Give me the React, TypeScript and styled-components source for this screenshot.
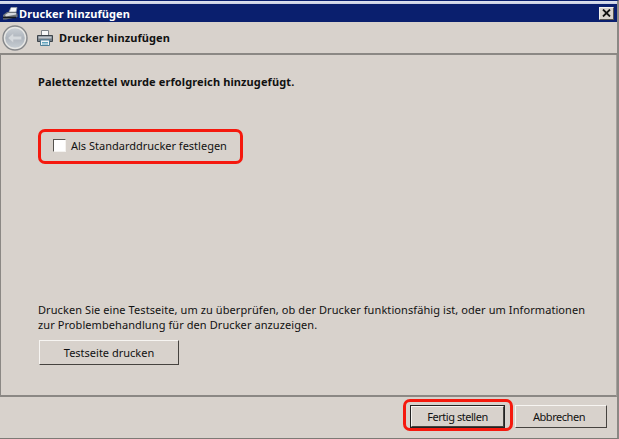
import styled, { createGlobalStyle } from 'styled-components';

const GlobalStyle = createGlobalStyle`
    html, body {
        margin: 0;
        padding: 0;
        background: #d8d2cc;
    }
    body {
        font-family: 'Noto Sans', 'Liberation Sans', sans-serif;
        font-size: 11px;
        color: #111;
    }
`

const Frame = styled.div`
    width: 619px;
    height: 439px;
    box-sizing: border-box;
    display: flex;
    flex-direction: column;
    overflow: hidden;
    background: #d8d2cc;
    border-top: 1px solid #0a1f6e;
    border-bottom: 1px solid #7d7a75;
    border-right: 2px solid #8b8884;
`

const TopEdge = styled.div`
    height: 3px;
    background: linear-gradient(#dfe3f0, #c9cfe2);
`

const TitleBar = styled.div`
    height: 18px;
    display: flex;
    align-items: center;
    gap: 1px;
    padding: 0 3px 0 2px;
    background: #0a1f6e;
    color: #fff;
    font-size: 11px;
    font-weight: 700;
    letter-spacing: 0.1px;
`

const TitleText = styled.span`
    flex: 1;
`

const CloseButton = styled.div`
    width: 15px;
    height: 13px;
    box-sizing: border-box;
    display: flex;
    align-items: center;
    justify-content: center;
    background: #d8d2cc;
    border: 1px solid;
    border-color: #f4f2ef #55524e #55524e #f4f2ef;
`

const Header = styled.div`
    height: 33px;
    display: flex;
    align-items: center;
    padding-left: 2px;
    border-bottom: 2px solid #8b8884;
    box-sizing: border-box;
    font-weight: 700;
`

const HeaderTitle = styled.span`
    margin-left: 6px;
    letter-spacing: 0.1px;
`

const PrinterSlot = styled.div`
    margin-left: 9px;
    display: flex;
`

const Panel = styled.div`
    flex: 1;
    display: flex;
    flex-direction: column;
    padding: 19px 30px 30px 37px;
    border-left: 1px solid #8b8884;
    border-right: 1px solid #a5a29d;
    border-bottom: 2px solid #8b8884;
`

const Message = styled.div`
    font-weight: 700;
    line-height: 16px;
    letter-spacing: 0.11px;
`

const Highlight = styled.div`
    align-self: flex-start;
    display: flex;
    align-items: center;
    gap: 5px;
    width: 205px;
    height: 35px;
    margin-top: 39px;
    padding: 0 0 3px 12px;
    box-sizing: border-box;
    border: 3px solid #f5190e;
    border-radius: 7px;
`

const Checkbox = styled.span`
    width: 13px;
    height: 13px;
    box-sizing: border-box;
    background: #fff;
    border: 1px solid;
    border-color: #55524e #f4f2ef #f4f2ef #55524e;
`

const Note = styled.p`
    margin: auto 0 0;
    line-height: 15px;
    white-space: nowrap;
    letter-spacing: 0.08px;
`

const Button = styled.button<{ $width: number; $height: number; $isDefault?: boolean }>`
    width: ${(p) => p.$width}px;
    height: ${(p) => p.$height}px;
    padding: 0;
    background: #d8d2cc;
    color: #111;
    font: inherit;
    border: 1px solid;
    border-color: #f7f5f2 #46433f #46433f #f7f5f2;
    box-shadow: ${(p) => (p.$isDefault ? '0 0 0 1px #222' : 'none')};
`

const TestButton = styled(Button)`
    align-self: flex-start;
    margin-top: 8px;
    margin-left: 1px;
`

const FooterButton = styled(Button)`
    letter-spacing: -0.45px;
`

const CancelButton = styled(FooterButton)`
    margin-top: 6px;
    padding-right: 4px;
`

const Footer = styled.div`
    height: 41px;
    box-sizing: border-box;
    display: flex;
    align-items: flex-start;
    justify-content: flex-end;
    padding: 2px 10px 0 0;
    gap: 2px;
`

const DefaultHighlight = styled.div`
    display: flex;
    padding: 4px 6px 1px 5px;
    border: 3px solid #f5190e;
    border-radius: 7px;
`

function BackIcon() {
    return (
        <svg width="26" height="26" viewBox="0 0 26 26">
            <defs>
                <linearGradient id="back" x1="0" y1="0" x2="0" y2="1">
                    <stop offset="0" stopColor="#c9ced4" />
                    <stop offset="0.5" stopColor="#aeb5bd" />
                    <stop offset="1" stopColor="#c6ccd2" />
                </linearGradient>
            </defs>
            <circle cx="13" cy="13" r="12" fill="#e6e6e4" stroke="#85878a" strokeWidth="1.4" />
            <circle cx="13" cy="13" r="9.8" fill="url(#back)" />
            <path d="M6 13l5.5-5v3.2h8v3.6h-8V18z" fill="#d5d9dd" stroke="#b9bec4" strokeWidth="0.6" />
        </svg>
    )
}

function PrinterIcon() {
    return (
        <svg width="16" height="16" viewBox="0 0 16 16">
            <path d="M4.5 .5h7v5h-7z" fill="#f7f8f9" stroke="#7c8288" />
            <path d="M.5 5.5h15v6H.5z" fill="#737c85" stroke="#3d444b" />
            <path d="M1.5 6.5h13v2h-13z" fill="#c0c7cd" />
            <path d="M3.5 10h9v5.5h-9z" fill="#f2f5f7" stroke="#4d7f99" />
            <path d="M5 12.5h6M5 14h6" stroke="#5fa3bd" />
        </svg>
    )
}

function TitleIcon() {
    return (
        <svg width="16" height="13" viewBox="0 0 16 13">
            <path d="M7 5l2-4.5h6L14 5z" fill="#f7f8fa" stroke="#9aa0a8" strokeWidth="0.8" />
            <path d="M1 8l4-3h9l1.5 2v3L4 12.5H1z" fill="#6f757c" />
            <path d="M3 8l3-2h8v1.5L4 9.5z" fill="#d5d8dc" />
            <path d="M1 10.5h13" stroke="#16191d" strokeWidth="1.5" />
        </svg>
    )
}

function App() {
    return (
        <Frame>
            <GlobalStyle />
            <TopEdge />
            <TitleBar>
                <TitleIcon />
                <TitleText>Drucker hinzufügen</TitleText>
                <CloseButton>
                    <svg width="9" height="8" viewBox="0 0 9 8">
                        <path d="M1 0.5l7 7M8 0.5l-7 7" stroke="#111" strokeWidth="1.8" />
                    </svg>
                </CloseButton>
            </TitleBar>
            <Header>
                <BackIcon />
                <PrinterSlot>
                    <PrinterIcon />
                </PrinterSlot>
                <HeaderTitle>Drucker hinzufügen</HeaderTitle>
            </Header>
            <Panel>
                <Message>Palettenzettel wurde erfolgreich hinzugefügt.</Message>
                <Highlight>
                    <Checkbox />
                    <span>Als Standarddrucker festlegen</span>
                </Highlight>
                <Note>
                    Drucken Sie eine Testseite, um zu überprüfen, ob der Drucker funktionsfähig ist, oder um Informationen
                    <br />
                    zur Problembehandlung für den Drucker anzuzeigen.
                </Note>
                <TestButton $width={140} $height={25}>Testseite drucken</TestButton>
            </Panel>
            <Footer>
                <DefaultHighlight>
                    <FooterButton $width={93} $height={21} $isDefault>Fertig stellen</FooterButton>
                </DefaultHighlight>
                <CancelButton $width={92} $height={23}>Abbrechen</CancelButton>
            </Footer>
        </Frame>
    )
}

export default App
